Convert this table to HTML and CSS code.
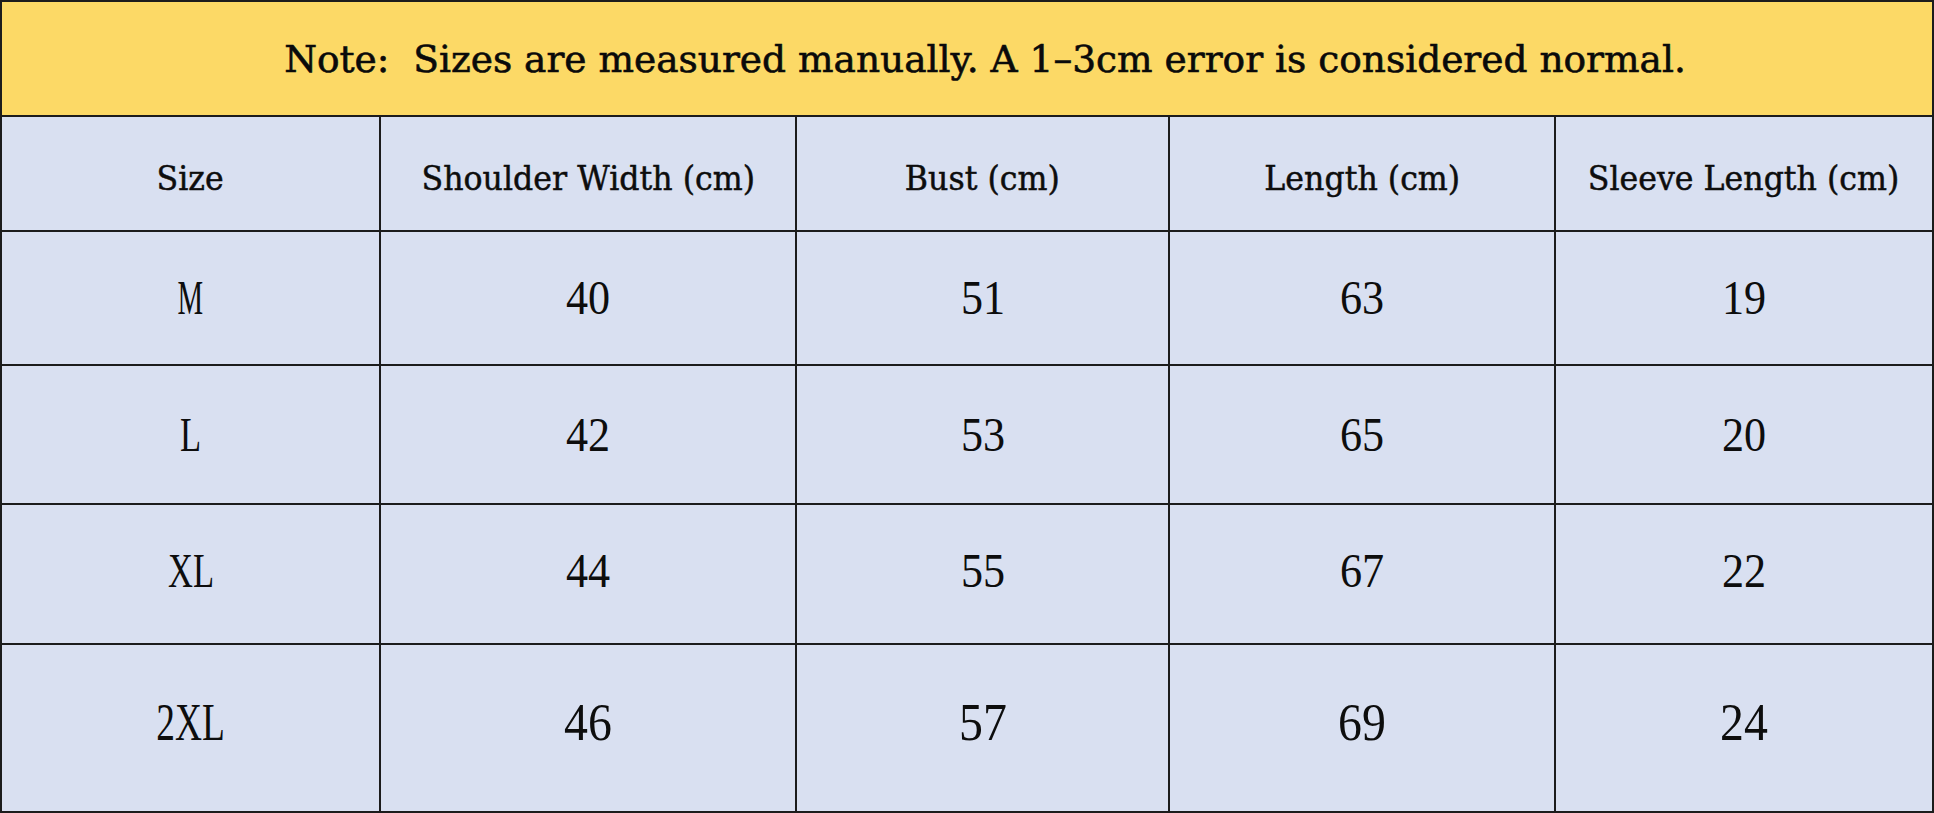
FILE: index.html
```html
<!DOCTYPE html>
<html lang="en">
<head>
<meta charset="utf-8">
<title>Size Chart</title>
<link rel="stylesheet" href="styles.css">
</head>
<body>
<div class="sheet">
  <div class="note"><span class="note-text">Note:&nbsp; Sizes are measured manually. A 1–3cm error is considered normal.</span></div>
  <div class="grid">
    <div class="cell head"><span class="hd">Size</span></div>
    <div class="cell head"><span class="hd">Shoulder Width (cm)</span></div>
    <div class="cell head"><span class="hd">Bust (cm)</span></div>
    <div class="cell head"><span class="hd">Length (cm)</span></div>
    <div class="cell head"><span class="hd">Sleeve Length (cm)</span></div>

    <div class="cell"><span class="lbl lbl-m">M</span></div>
    <div class="cell"><span class="num">40</span></div>
    <div class="cell"><span class="num">51</span></div>
    <div class="cell"><span class="num">63</span></div>
    <div class="cell"><span class="num">19</span></div>

    <div class="cell"><span class="lbl">L</span></div>
    <div class="cell"><span class="num">42</span></div>
    <div class="cell"><span class="num">53</span></div>
    <div class="cell"><span class="num">65</span></div>
    <div class="cell"><span class="num">20</span></div>

    <div class="cell row-xl"><span class="lbl">XL</span></div>
    <div class="cell row-xl"><span class="num">44</span></div>
    <div class="cell row-xl"><span class="num">55</span></div>
    <div class="cell row-xl"><span class="num">67</span></div>
    <div class="cell row-xl"><span class="num">22</span></div>

    <div class="cell row-last"><span class="lbl">2XL</span></div>
    <div class="cell row-last"><span class="num">46</span></div>
    <div class="cell row-last"><span class="num">57</span></div>
    <div class="cell row-last"><span class="num">69</span></div>
    <div class="cell row-last"><span class="num">24</span></div>
  </div>
</div>
</body>
</html>
```

FILE: styles.css
```css
html, body {
  margin: 0;
  padding: 0;
  background: #ffffff;
}

.sheet {
  box-sizing: border-box;
  width: 1934px;
  height: 813px;
  border: 2px solid #1c1c1c;
  background: #1c1c1c;
  display: flex;
  flex-direction: column;
  gap: 2px;
}

.note {
  height: 113px;
  background: #fcd966;
  display: flex;
  align-items: center;
  justify-content: center;
  box-sizing: border-box;
  padding-left: 36px;
  padding-top: 2px;
}

.note-text {
  font-family: "DejaVu Serif", serif;
  font-size: 37.5px;
  line-height: 1;
  color: #0a0a0a;
  white-space: nowrap;
  -webkit-text-stroke: 0.6px #0a0a0a;
}

.grid {
  flex: 1;
  display: grid;
  grid-template-columns: 377px 414px 371px 384px 1fr;
  grid-template-rows: 113px 132px 137px 138px 1fr;
  gap: 2px;
}

.cell {
  background: #d9e0f1;
  display: flex;
  align-items: center;
  justify-content: center;
  box-sizing: border-box;
  color: #0d0d0d;
}

.head {
  padding-top: 9px;
}

.hd {
  display: inline-block;
  font-family: "DejaVu Serif", serif;
  font-size: 34px;
  line-height: 1;
  white-space: nowrap;
  transform: scaleX(0.93);
  -webkit-text-stroke: 0.5px #0d0d0d;
}

.num,
.lbl {
  display: inline-block;
  font-family: "Liberation Serif", "Times New Roman", serif;
  font-size: 48px;
  line-height: 1;
  white-space: nowrap;
}

.num {
  transform: scaleX(0.92);
}

.lbl {
  transform: scaleX(0.72);
}

.lbl-m {
  transform: scaleX(0.6);
}

.row-xl {
  padding-bottom: 6px;
}

.row-last {
  padding-bottom: 10px;
}

.row-last .num,
.row-last .lbl {
  font-size: 52px;
}
```
